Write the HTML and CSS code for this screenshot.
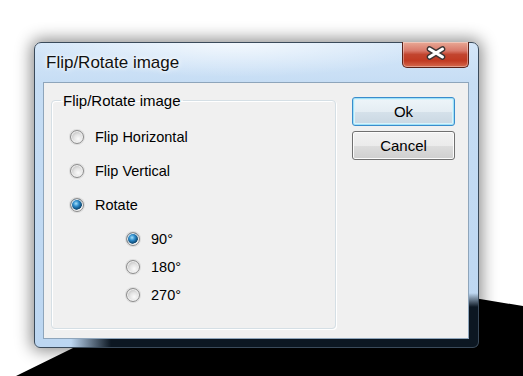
FILE: index.html
```html
<!DOCTYPE html>
<html lang="en">
<head>
  <meta charset="UTF-8" />
  <title>Flip/Rotate image</title>
  <link rel="stylesheet" href="styles.css">
</head>
<body>
  <svg class="backdrop" width="523" height="376" viewBox="0 0 523 376">
    <polygon points="16,376 75,347 261,258 480,299 523,306 523,376" fill="#000" />
  </svg>

  <div class="window">
    <div class="titlebar">
      <span class="title">Flip/Rotate image</span>
      <button class="close" title="Close">
        <svg width="22" height="14" viewBox="0 0 22 14">
          <path d="M4.5 3 L17.5 11 M17.5 3 L4.5 11" stroke="#3b3434" stroke-width="5.6" stroke-linecap="round" fill="none" />
          <path d="M4.5 3 L17.5 11 M17.5 3 L4.5 11" stroke="#fff" stroke-width="3" stroke-linecap="round" fill="none" />
        </svg>
      </button>
    </div>

    <div class="client">
      <fieldset class="group">
        <legend>Flip/Rotate image</legend>
        <div class="options">
          <label class="option"><span class="radio"></span>Flip Horizontal</label>
          <label class="option"><span class="radio"></span>Flip Vertical</label>
          <label class="option"><span class="radio on"></span>Rotate</label>
          <div class="suboptions">
            <label class="option"><span class="radio on"></span>90°</label>
            <label class="option"><span class="radio"></span>180°</label>
            <label class="option"><span class="radio"></span>270°</label>
          </div>
        </div>
      </fieldset>

      <div class="actions">
        <button class="btn default">Ok</button>
        <button class="btn">Cancel</button>
      </div>
    </div>
  </div>
</body>
</html>
```

FILE: styles.css
```css
body {
  margin: 0;
  width: 523px;
  height: 376px;
  overflow: hidden;
  position: relative;
  background: #fff;
  font-family: 'Liberation Sans', Arial, sans-serif;
  font-size: 14.5px;
  color: #000;
  padding: 42px 0 0 34px;
  box-sizing: border-box;
}

.backdrop {
  position: absolute;
  left: 0;
  top: 0;
}

/* window frame (aero glass over white / black) */
.window {
  position: relative;
  width: 445px;
  height: 306px;
  box-sizing: border-box;
  border: 1px solid #3a4a5a;
  border-radius: 7px 7px 6px 6px;
  display: flex;
  flex-direction: column;
  box-shadow: 0 0 16px 3px rgba(0, 0, 0, 0.45);
  background:
    linear-gradient(to right, rgba(12, 23, 34, 0) 36px, #0c1722 76px) bottom / 100% 9px no-repeat,
    linear-gradient(to bottom, rgba(12, 23, 34, 0) 250px, #0c1722 264px) right / 10px 100% no-repeat,
    radial-gradient(ellipse at 45% 0%, rgba(255, 255, 255, 0.7), rgba(255, 255, 255, 0) 60%) top / 100% 40px no-repeat,
    linear-gradient(to bottom, #d5e7f9, #c6ddf4 40px, #bcd6f1);
}

.titlebar {
  height: 39px;
  display: flex;
  align-items: center;
  justify-content: space-between;
  padding-left: 11px;
}

.title {
  font-size: 17px;
  color: #111;
  text-shadow: 0 0 6px #fff, 0 0 3px #fff;
  margin-top: 1px;
}

.close {
  align-self: flex-start;
  width: 67px;
  height: 26px;
  margin: -1px 9px 0 0;
  padding: 0;
  border: 1px solid #5a2219;
  border-top: none;
  border-radius: 0 0 5px 5px;
  background: linear-gradient(to bottom, #e9a996 0%, #d9796a 35%, #c2452f 50%, #c13a22 75%, #d56a4e 100%);
  box-shadow: inset 0 0 0 1px rgba(255, 255, 255, 0.35);
  display: flex;
  align-items: center;
  justify-content: center;
}

.close svg {
  margin-top: -3px;
}

.client {
  flex: 1;
  margin: 0 9px 8px 8px;
  border: 1px solid #8ea5bb;
  background: #f0f0f0;
  display: flex;
  align-items: stretch;
}

.group {
  width: 285px;
  box-sizing: border-box;
  margin: 9px 0 9px 7px;
  padding: 0 0 0 19px;
  border: 1px solid #d5dfe5;
  border-radius: 4px;
  box-shadow: inset 1px 1px 0 #fff, 1px 1px 0 #fff;
}

.group legend {
  margin-left: -10px;
  padding: 0 2px;
  font-size: 15px;
}

.options {
  display: flex;
  flex-direction: column;
  gap: 14px;
  padding-top: 18px;
}

.suboptions {
  display: flex;
  flex-direction: column;
  gap: 8px;
  padding-left: 56px;
}

.option {
  height: 20px;
  display: flex;
  align-items: center;
  gap: 11px;
}

.radio {
  width: 14px;
  height: 14px;
  margin-left: -1px;
  box-sizing: border-box;
  border-radius: 50%;
  border: 1px solid #8c8c8c;
  background: radial-gradient(circle at 60% 65%, #fbfbfb 0%, #e4e4e4 40%, #bdbdbd 80%);
  box-shadow: inset 0 0 0 1px #f2f2f2, 0 0 0 1px rgba(200, 200, 200, 0.5);
}

.radio.on {
  background:
    radial-gradient(circle at 42% 38%, #a6e1fa 0%, #2e8ccb 28%, #0b456f 58%, rgba(11, 69, 111, 0) 64%),
    radial-gradient(circle at 60% 65%, #fbfbfb 0%, #e4e4e4 40%, #bdbdbd 80%);
}

.actions {
  display: flex;
  flex-direction: column;
  gap: 5px;
  margin: 14px 0 0 16px;
}

.btn {
  width: 103px;
  height: 29px;
  font-family: inherit;
  font-size: 15px;
  color: #000;
  border: 1px solid #707070;
  border-radius: 3px;
  background: linear-gradient(to bottom, #f2f2f2 0%, #ebebeb 50%, #dddddd 51%, #cfcfcf 100%);
  box-shadow: inset 0 0 0 1px #fcfcfc;
  padding: 0;
}

.btn.default {
  border-color: #3a8ccc;
  background: linear-gradient(to bottom, #eef5fa 0%, #e4edf3 50%, #d5e1ea 51%, #c9d7e2 100%);
  box-shadow: inset 0 0 0 1px #9fe1f7, inset 0 0 0 2px #d9f2fb;
}
```
